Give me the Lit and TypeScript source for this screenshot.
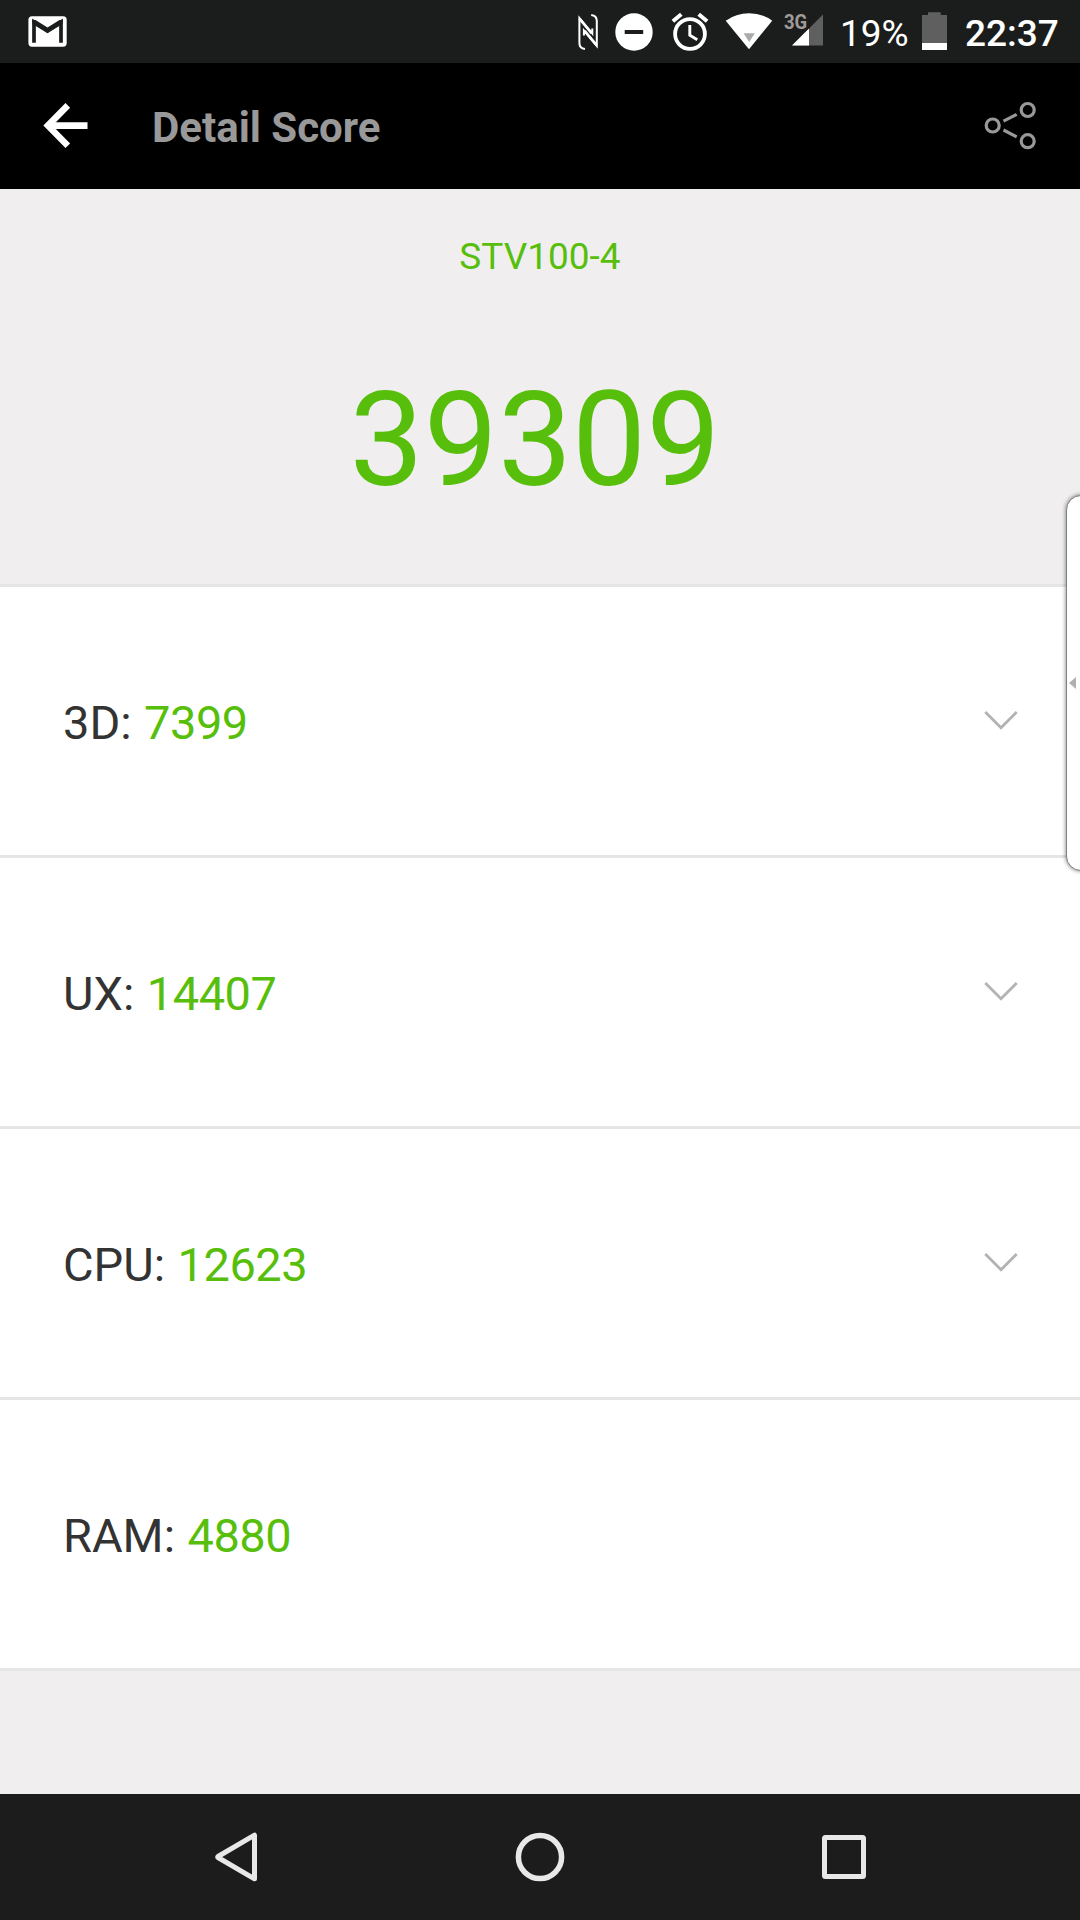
import { LitElement, html, css, svg, nothing } from "lit";
import { customElement, property } from "lit/decorators.js";

/** Icon artwork; each is drawn on its own viewBox. */
const icon = (cls: string, box: string, body: unknown) => {
  const [, , w, h] = box.split(" ");
  return html`<svg class=${cls} viewBox=${box} width=${w} height=${h}>${body}</svg>`;
};

const icons = {
  gmail: icon("icon gmail", "28 0 39 63", svg`
    <rect x="28.4" y="16.3" width="38.3" height="30.4" rx="3.6" fill="#fff"/>
    <path d="M34 42.7V22L47.5 31L61 22V42.7" fill="none" stroke="#1b1d1c" stroke-width="3.7"/>
    <path d="M32.3 20h3.2l12 7.6L59.5 20h3.2v4L47.5 33L32.3 24z" fill="#1b1d1c"/>`),
  nfc: icon("icon nfc", "576 0 24 63", svg`
    <g fill="none" stroke="#fff" stroke-width="2">
      <path d="M585 49C581 48.6 579.4 47 579.4 43V18L592.3 33.500V28.500"/>
      <path d="M591.2 15C595.2 15.4 596.8 17 596.8 21V46L583.9 30.500V35.500"/>
      <path d="M579.4 18.600L591.500 33.300M596.800 45.400L584.700 30.700" stroke-width="2.500"/>
    </g>`),
  dnd: icon("icon dnd", "615 0 38 63", svg`
    <circle cx="634" cy="32" r="18.7" fill="#fff"/>
    <rect x="624.7" y="30" width="18.5" height="4" fill="#1b1d1c"/>`),
  alarm: icon("icon alarm", "671 0 38 63", svg`
    <g fill="none" stroke="#fff">
      <circle cx="690" cy="34" r="14.9" stroke-width="3.8"/>
      <path d="M672.9 21.2L681.3 14.2M707.1 21.2L698.7 14.2" stroke-width="4"/>
      <path d="M689.8 25V35.3L697.3 39.8" stroke-width="2.9"/>
    </g>`),
  wifi: icon("icon wifi", "725 0 48 63", svg`
    <path d="M749 49.3L725.7 20.7Q736 13.2 749 13.2T772.2 20.7z" fill="#fff"/>
    <path d="M743.6 33.2H754.8L749.2 42z" fill="#aaa"/>`),
  signal: icon("signal-shape", "792 0 31 63", svg`
    <path d="M823 14.5V45.6H792z" fill="#5f5f5f"/>
    <path d="M809 28.5V45.6H792z" fill="#fff"/>
    <path d="M792 12H809.5V28L805 31.5H792z" fill="#1b1d1c"/>`),
  battery: icon("icon battery", "922 0 25 63", svg`
    <path d="M928 12.3H940.7V15H947V50H922V15H928z" fill="#5f5f5f"/>
    <rect x="922" y="43" width="25" height="7" fill="#fff"/>`),
  back: icon("back", "43 101 46 50", svg`
    <path d="M67.8 105.4L47.9 125.6L67.8 145.8" fill="none" stroke="#fff" stroke-width="6.5"/>
    <path d="M49 125.6H87.5" stroke="#fff" stroke-width="6.8"/>`),
  share: icon("share", "984 101 53 50", svg`
    <g fill="none" stroke="#999" stroke-width="3.2">
      <circle cx="992.7" cy="125.5" r="6.5"/>
      <circle cx="1027.7" cy="110" r="6.5"/>
      <circle cx="1027.7" cy="141.2" r="6.5"/>
      <path d="M1003.5 121.2L1016.7 114.3M1003.5 130L1016.7 136.9"/>
    </g>`),
  chevron: icon("chevron", "984 710 34 20", svg`
    <path d="M985.3 712L1001 727.7L1016.7 712" fill="none" stroke="#b3b3b3" stroke-width="2.8"/>`),
  navBack: icon("nav-back", "214 1831 44 52", svg`
    <path d="M254.5 1835.2V1878.8L218 1857.5Q217.3 1857 218 1856.5z" fill="none" stroke="#e8e8e8" stroke-width="5" stroke-linejoin="round"/>`),
  navHome: icon("nav-home", "515 1832 50 50", svg`
    <circle cx="540" cy="1857" r="21.6" fill="none" stroke="#e8e8e8" stroke-width="5.5"/>`),
  navRecent: icon("nav-recent", "822 1835 44 44", svg`
    <rect x="824.5" y="1837.5" width="39" height="39" rx="1" fill="none" stroke="#e8e8e8" stroke-width="5"/>`),
};

@customElement("status-bar")
class StatusBar extends LitElement {
  static styles = css`
    :host { display: flex; height: 63px; background: #1b1d1c; color: #fff; font-size: 37px; line-height: 63px; }
    svg { display: block; flex: none; }
    .gmail { margin-left: 28px; }
    .tray { display: flex; margin-left: auto; padding-right: 18px; }
    .dnd { margin-left: 15px; }
    .alarm { margin-left: 18px; }
    .wifi { margin-left: 16px; }
    .signal { position: relative; width: 31px; margin-left: 19px; }
    .network { position: absolute; left: -8px; top: 10px; font: 700 21px/24px Roboto, sans-serif; color: #a09b98; transform: scaleX(0.88); transform-origin: left; }
    .percent { width: 99px; padding-left: 17px; box-sizing: border-box; white-space: nowrap; padding-top: 2px; }
    .clock { width: 97px; margin-left: 18px; font-weight: 500; padding-top: 2px; }
  `;
  render() {
    return html`
      ${icons.gmail}
      <div class="tray">
        ${icons.nfc}${icons.dnd}${icons.alarm}${icons.wifi}
        <div class="signal">${icons.signal}<span class="network">3G</span></div>
        <div class="percent">19%</div>
        ${icons.battery}
        <div class="clock">22:37</div>
      </div>`;
  }
}

@customElement("score-row")
class ScoreRow extends LitElement {
  @property() label = "";
  @property() score = "";
  @property({ type: Boolean }) expandable = false;
  static styles = css`
    :host { display: flex; align-items: center; justify-content: space-between; height: 268px; padding: 0 62px 0 63px; background: #fff; border-bottom: 3px solid #e5e5e5; font-size: 47px; line-height: 56px; color: #333; }
    .text { padding-top: 4px; }
    .score { margin-left: 0.8px; letter-spacing: -0.5px; color: #57bf0c; }
    .chevron { display: block; margin-bottom: 2px; }
  `;
  render() {
    return html`<div class="text">${this.label}: <span class="score">${this.score}</span></div>
      ${this.expandable ? icons.chevron : nothing}`;
  }
}

const scores = [
  { label: "3D", score: "7399", expandable: true },
  { label: "UX", score: "14407", expandable: true },
  { label: "CPU", score: "12623", expandable: true },
  { label: "RAM", score: "4880", expandable: false },
];

@customElement("app-root")
class AppRoot extends LitElement {
  static styles = css`
    :host { display: flex; flex-direction: column; position: relative; width: 1080px; height: 1920px; overflow: hidden; background: #f0eeef; font-family: Roboto, sans-serif; }
    svg { display: block; flex: none; }
    .app-bar { display: flex; align-items: center; height: 126px; padding: 0 43px; box-sizing: border-box; background: #000; }
    .title { margin: 3px auto 0 63px; font-size: 42px; line-height: 50px; font-weight: 700; color: #999; }
    .summary { height: 398px; box-sizing: border-box; border-bottom: 3px solid #e5e5e5; color: #57bf0c; text-align: center; }
    .device { padding-top: 47px; font-size: 37px; line-height: 42px; }
    .total { padding: 84px 10px 0 0; font-size: 132px; line-height: 156px; }
    .nav { display: flex; align-items: center; justify-content: space-between; height: 126px; margin-top: auto; padding: 0 214px; box-sizing: border-box; background: #1c1c1c; }
    .edge-panel { position: absolute; left: 1066px; top: 495px; width: 40px; height: 376px; box-sizing: border-box; border: 1px solid #7f8282; border-radius: 15px; background: #fff; box-shadow: 0 0 4px rgba(0, 0, 0, 0.55); display: flex; align-items: center; padding-left: 2px; }
    .handle { width: 7px; height: 12px; background: #b0b0b0; clip-path: polygon(100% 0, 100% 100%, 0 50%); }
  `;
  render() {
    return html`
      <status-bar></status-bar>
      <header class="app-bar">${icons.back}<div class="title">Detail Score</div>${icons.share}</header>
      <section class="summary">
        <div class="device">STV100-4</div>
        <div class="total">39309</div>
      </section>
      ${scores.map((s) => html`<score-row .label=${s.label} .score=${s.score} ?expandable=${s.expandable}></score-row>`)}
      <nav class="nav">${icons.navBack}${icons.navHome}${icons.navRecent}</nav>
      <div class="edge-panel"><div class="handle"></div></div>`;
  }
}
